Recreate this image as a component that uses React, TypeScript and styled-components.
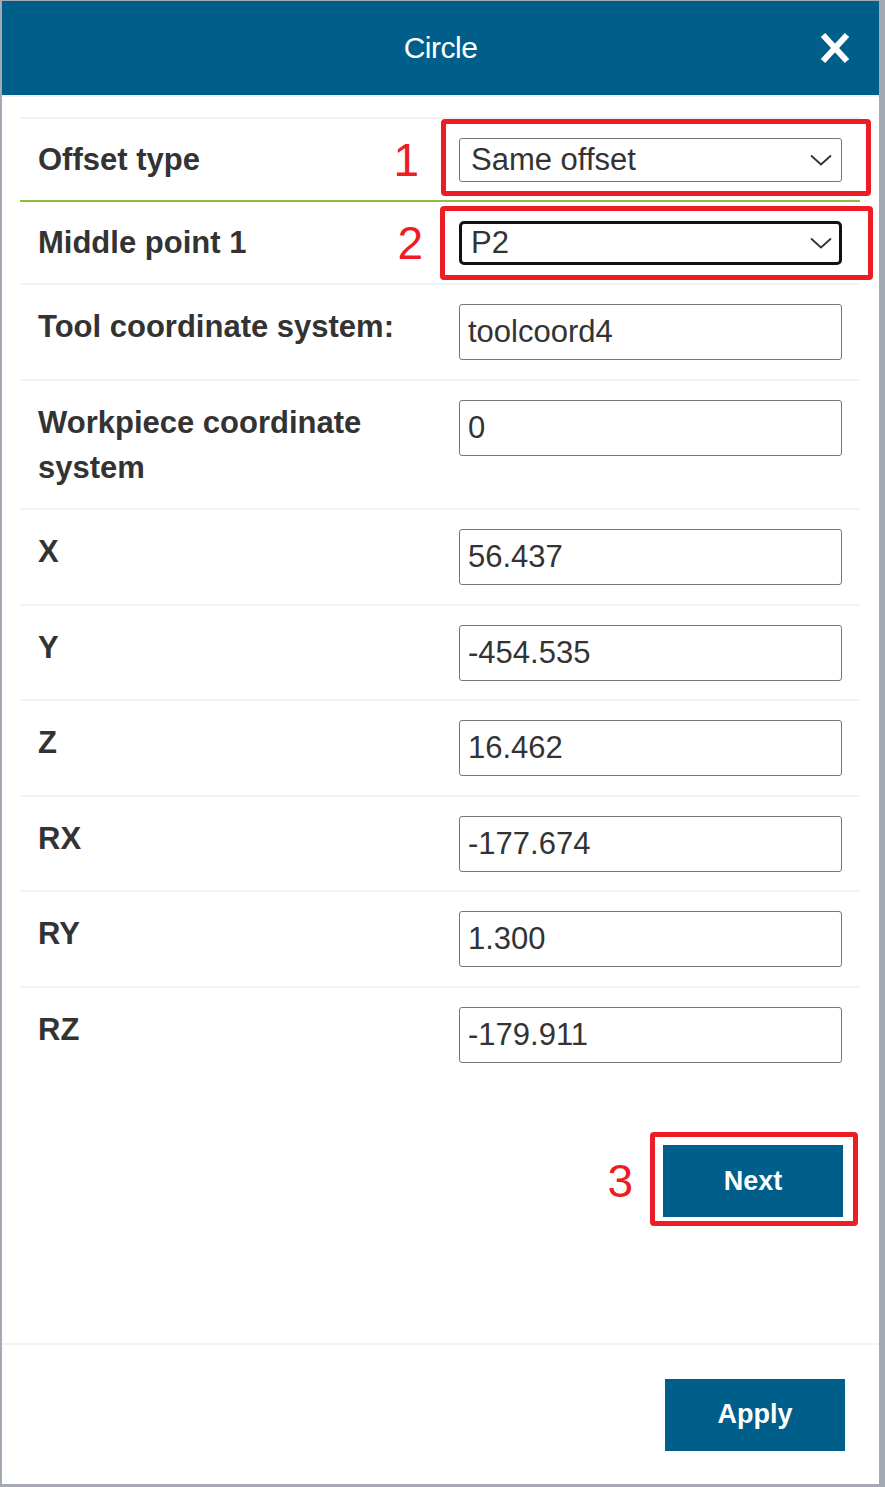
import React from 'react';
import styled, { createGlobalStyle } from 'styled-components';

const GlobalStyle = createGlobalStyle`
  html, body {
    margin: 0;
    padding: 0;
  }
  body {
    background: #a4a9b3;
    font-family: "Liberation Sans", Arial, sans-serif;
  }
`;

const BLUE = '#005e8a';

interface Field {
  label: string;
  value: string;
}

const fields: Field[] = [
  { label: 'Tool coordinate system:', value: 'toolcoord4' },
  { label: 'Workpiece coordinate system', value: '0' },
  { label: 'X', value: '56.437' },
  { label: 'Y', value: '-454.535' },
  { label: 'Z', value: '16.462' },
  { label: 'RX', value: '-177.674' },
  { label: 'RY', value: '1.300' },
  { label: 'RZ', value: '-179.911' },
];

interface Box {
  top: number;
  right: number;
  bottom: number;
  left: number;
}

const Annotated = ({ n, box, numRight, children }: { n: number; box: Box; numRight: number; children: React.ReactNode }) => {
  return (
    <AnnotWrap>
      {children}
      <Frame $box={box} />
      <Marker $right={numRight}>{n}</Marker>
    </AnnotWrap>
  );
};

const Chevron = () => (
  <ChevronSvg width="22" height="12" viewBox="0 0 22 12">
    <path d="M1 1.5 L11 10.5 L21 1.5" fill="none" stroke="#333" strokeWidth="1.8" />
  </ChevronSvg>
);

const FakeSelect = ({ value, focused }: { value: string; focused?: boolean }) => (
  <SelectWrap>
    <Select $focused={focused} defaultValue={value}>
      <option>{value}</option>
    </Select>
    <Chevron />
  </SelectWrap>
);

export default function App() {
  return (
    <>
      <GlobalStyle />
      <Dialog>
        <Header>
          <Title>Circle</Title>
          <CloseButton aria-label="close">
            <svg width="32" height="32" viewBox="0 0 32 32">
              <path d="M4 3 L28 29 M28 3 L4 29" stroke="#fff" strokeWidth="6" strokeLinecap="butt" />
            </svg>
          </CloseButton>
        </Header>
        <Body>
          <FormList>
            <Row $accent $center>
              <Label>Offset type</Label>
              <Annotated n={1} box={{ top: -19, right: -29, bottom: -14, left: -18 }} numRight={40}>
                <FakeSelect value="Same offset" />
              </Annotated>
            </Row>
            <Row $center>
              <Label>Middle point 1</Label>
              <Annotated n={2} box={{ top: -15, right: -31, bottom: -15, left: -19 }} numRight={36}>
                <FakeSelect value="P2" focused />
              </Annotated>
            </Row>
            {fields.map((f, i) => (
              <Row key={f.label} $last={i === fields.length - 1}>
                <Label>{f.label}</Label>
                <Input readOnly value={f.value} />
              </Row>
            ))}
          </FormList>
          <NextArea>
            <Annotated n={3} box={{ top: -13, right: -15, bottom: -9, left: -13 }} numRight={30}>
              <PrimaryButton>Next</PrimaryButton>
            </Annotated>
          </NextArea>
        </Body>
        <Footer>
          <PrimaryButton>Apply</PrimaryButton>
        </Footer>
      </Dialog>
    </>
  );
}

const Dialog = styled.div`
  width: 877px;
  height: 1483px;
  margin: 1px 6px 3px 2px;
  background: #fff;
  display: flex;
  flex-direction: column;
  overflow: hidden;
`;

const Header = styled.div`
  height: 94px;
  background: ${BLUE};
  display: flex;
  align-items: center;
  justify-content: center;
  position: relative;
  border-bottom: 2px solid #f0f0f0;
  flex-shrink: 0;
`;

const Title = styled.div`
  color: #fff;
  font-size: 30px;
  letter-spacing: -0.5px;
`;

const CloseButton = styled.button`
  position: absolute;
  right: 28px;
  top: 31px;
  padding: 0;
  border: none;
  background: transparent;
  display: flex;
  cursor: pointer;
`;

const Body = styled.div`
  flex: 1;
  padding: 20px 19px 0 18px;
  display: flex;
  flex-direction: column;
`;

const FormList = styled.div`
  border-top: 2px solid #f2f2f2;
`;

const Row = styled.div<{ $accent?: boolean; $center?: boolean; $last?: boolean }>`
  display: grid;
  grid-template-columns: 401px 383px;
  column-gap: 20px;
  padding: ${(p) => (p.$center ? '18px 18px' : '19px 18px 18.5px')};
  align-items: ${(p) => (p.$center ? 'center' : 'start')};
  border-bottom: 2px solid ${(p) => (p.$accent ? '#8dbb3c' : p.$last ? 'transparent' : '#f2f2f2')};
`;

const Label = styled.div`
  font-size: 31px;
  font-weight: bold;
  line-height: 45px;
  color: #333;
`;

const AnnotWrap = styled.div`
  position: relative;
`;

const Frame = styled.div<{ $box: Box }>`
  position: absolute;
  top: ${(p) => p.$box.top}px;
  right: ${(p) => p.$box.right}px;
  bottom: ${(p) => p.$box.bottom}px;
  left: ${(p) => p.$box.left}px;
  border: 5px solid #ee1c25;
  border-radius: 4px;
  pointer-events: none;
`;

const Marker = styled.div<{ $right: number }>`
  position: absolute;
  top: 50%;
  right: calc(100% + ${(p) => p.$right}px);
  transform: translateY(-50%);
  color: #ee1c25;
  font-size: 46px;
  line-height: 1;
`;

const SelectWrap = styled.div`
  position: relative;
`;

const Select = styled.select<{ $focused?: boolean }>`
  appearance: none;
  -webkit-appearance: none;
  width: 100%;
  height: 44px;
  box-sizing: border-box;
  border: ${(p) => (p.$focused ? '3px solid #111' : '1px solid #767676')};
  border-radius: ${(p) => (p.$focused ? '5px' : '3px')};
  padding: 0 40px 0 ${(p) => (p.$focused ? '9px' : '11px')};
  background: #fff;
  font-family: "Liberation Sans", Arial, sans-serif;
  font-size: 31px;
  color: #333;
  outline: none;
`;

const ChevronSvg = styled.svg`
  position: absolute;
  right: 10px;
  top: 50%;
  transform: translateY(-50%);
  pointer-events: none;
`;

const Input = styled.input`
  width: 100%;
  height: 56px;
  box-sizing: border-box;
  border: 1px solid #767676;
  border-radius: 3px;
  padding: 0 8px;
  font-family: "Liberation Sans", Arial, sans-serif;
  font-size: 31px;
  color: #333;
  outline: none;
`;

const NextArea = styled.div`
  display: flex;
  justify-content: flex-end;
  padding: 62px 17px 0 0;
`;

const PrimaryButton = styled.button`
  width: 180px;
  height: 72px;
  background: ${BLUE};
  color: #fff;
  border: none;
  font-family: "Liberation Sans", Arial, sans-serif;
  font-size: 27px;
  font-weight: bold;
  cursor: pointer;
  display: block;
`;

const Footer = styled.div`
  height: 139px;
  border-top: 2px solid #f2f2f2;
  display: flex;
  align-items: center;
  justify-content: flex-end;
  padding-right: 34px;
  flex-shrink: 0;
`;
